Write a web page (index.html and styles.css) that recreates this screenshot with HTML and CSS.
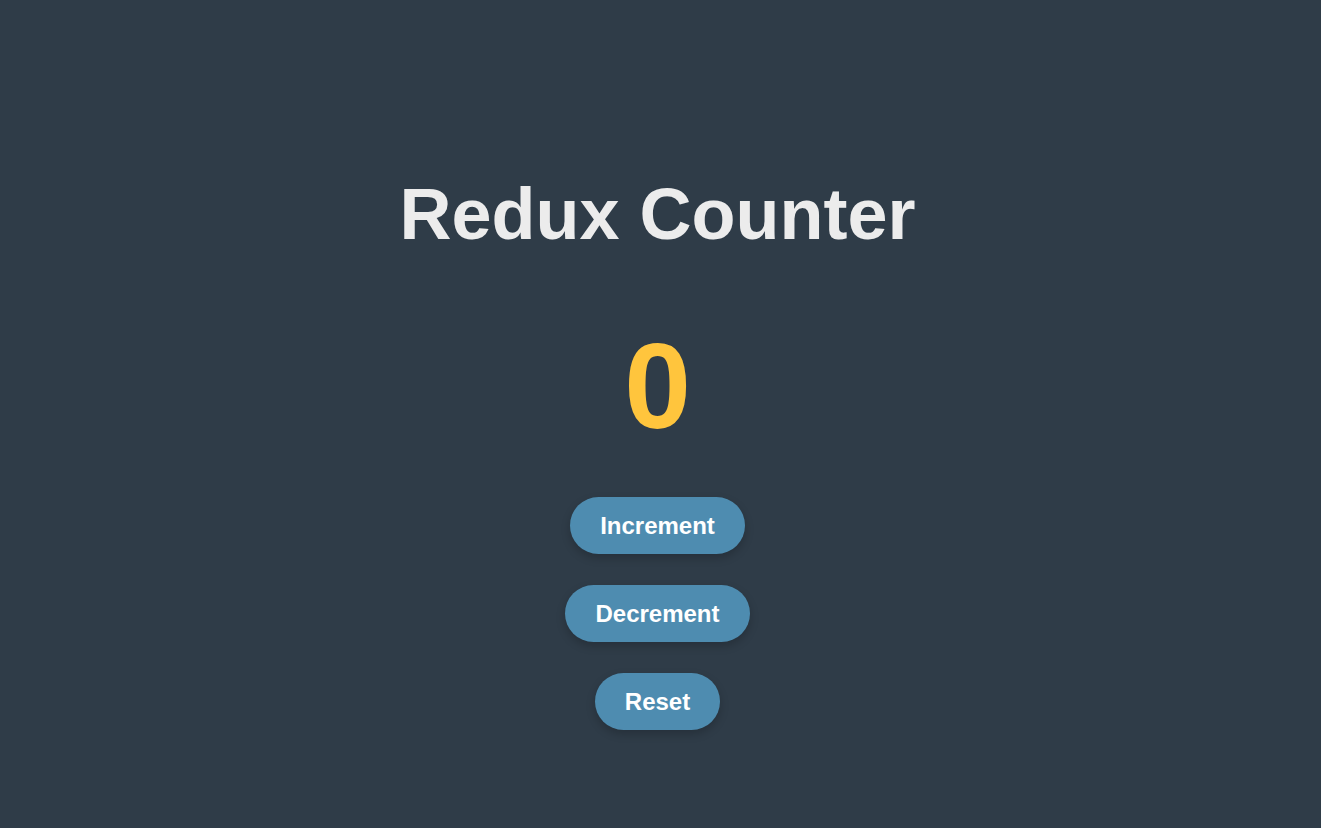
FILE: index.html
```html
<!DOCTYPE html>
<html lang="en">
<head>
<meta charset="utf-8">
<title>Redux Counter</title>
<link rel="stylesheet" href="styles.css">
</head>
<body>
<main class="app">
  <h1 class="title">Redux Counter</h1>
  <div class="count">0</div>
  <div class="actions">
    <button class="btn">Increment</button>
    <button class="btn">Decrement</button>
    <button class="btn">Reset</button>
  </div>
</main>
</body>
</html>
```

FILE: styles.css
```css
html, body {
  margin: 0;
  padding: 0;
  height: 100%;
}
body {
  background: #2f3c48;
  font-family: "Liberation Sans", Arial, sans-serif;
  color: #ececec;
}
.app {
  min-height: 100vh;
  box-sizing: border-box;
  display: flex;
  flex-direction: column;
  align-items: center;
  padding: 173px 6px 0 0;
}
.title {
  font-size: 72px;
  font-weight: bold;
  margin: 0 0 61px;
  color: #ececec;
  line-height: 1.15;
}
.count {
  font-size: 120px;
  font-weight: bold;
  color: #ffc53d;
  line-height: 1.15;
  margin-bottom: 42px;
}
.actions {
  display: flex;
  flex-direction: column;
  align-items: center;
  gap: 31px;
}
.btn {
  font-family: "Liberation Sans", Arial, sans-serif;
  font-size: 24px;
  font-weight: bold;
  color: #ffffff;
  background: #4e8cb0;
  border: none;
  border-radius: 30px;
  padding: 15px 30px;
  line-height: 27px;
  box-shadow: 0 4px 10px rgba(0, 0, 0, 0.2);
  cursor: pointer;
}
```
